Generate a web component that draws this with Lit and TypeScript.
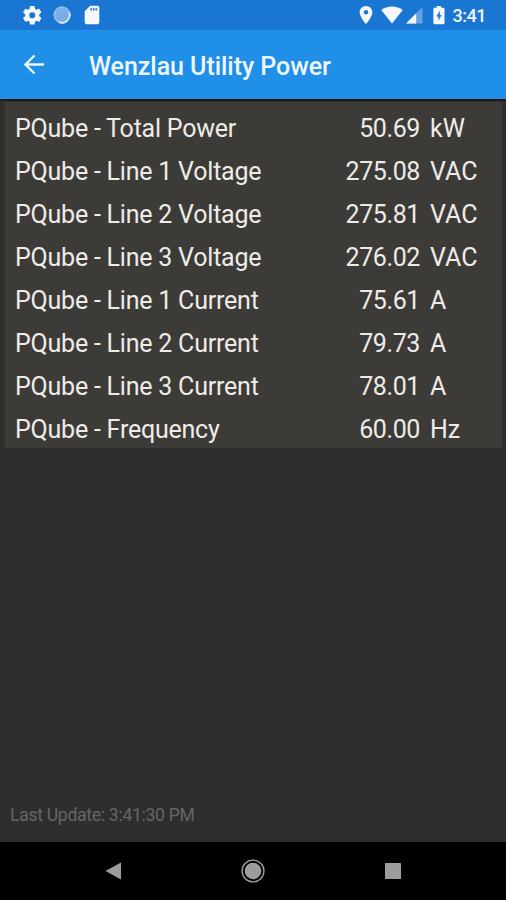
import { LitElement, html, css } from "lit";
import { customElement } from "lit/decorators.js";

interface Reading {
  name: string;
  value: string;
  unit: string;
}

const READINGS: Reading[] = [
  { name: "PQube - Total Power", value: "50.69", unit: "kW" },
  { name: "PQube - Line 1 Voltage", value: "275.08", unit: "VAC" },
  { name: "PQube - Line 2 Voltage", value: "275.81", unit: "VAC" },
  { name: "PQube - Line 3 Voltage", value: "276.02", unit: "VAC" },
  { name: "PQube - Line 1 Current", value: "75.61", unit: "A" },
  { name: "PQube - Line 2 Current", value: "79.73", unit: "A" },
  { name: "PQube - Line 3 Current", value: "78.01", unit: "A" },
  { name: "PQube - Frequency", value: "60.00", unit: "Hz" },
];

@customElement("status-bar")
class StatusBar extends LitElement {
  static styles = css`
    :host {
      display: flex;
      box-sizing: border-box;
      height: 30px;
      padding: 0 20px 0 21px;
      justify-content: space-between;
      align-items: center;
      background: #1976d2;
      color: #f4f8fd;
    }
    svg {
      display: block;
      fill: currentColor;
    }
    .group {
      display: flex;
      align-items: center;
      height: 30px;
    }
    .sync {
      margin-left: 9.5px;
    }
    .card {
      margin-left: 10px;
    }
    .wifi {
      margin-left: 8px;
    }
    .signal {
      margin-left: 3px;
    }
    .battery {
      margin-left: 10px;
    }
    .time {
      margin-left: 8px;
      padding-top: 2px;
      font: 500 18px/28px Roboto, sans-serif;
      letter-spacing: -0.5px;
    }
  `;

  render() {
    return html`
      <div class="group">
        <svg width="22.5" height="22.5" viewBox="0 0 24 24">
          <path
            d="M19.43 12.98c.04-.32.07-.64.07-.98s-.03-.66-.07-.98l2.11-1.65c.19-.15.24-.42.12-.64l-2-3.46c-.12-.22-.39-.3-.61-.22l-2.49 1c-.52-.4-1.08-.73-1.69-.98l-.38-2.65C14.46 2.18 14.25 2 14 2h-4c-.25 0-.46.18-.49.42l-.38 2.65c-.61.25-1.17.59-1.69.98l-2.49-1c-.23-.09-.49 0-.61.22l-2 3.46c-.13.22-.07.49.12.64l2.11 1.65c-.04.32-.07.65-.07.98s.03.66.07.98l-2.11 1.65c-.19.15-.24.42-.12.64l2 3.46c.12.22.39.3.61.22l2.49-1c.52.4 1.08.73 1.69.98l.38 2.65c.03.24.24.42.49.42h4c.25 0 .46-.18.49-.42l.38-2.65c.61-.25 1.17-.59 1.69-.98l2.49 1c.23.09.49 0 .61-.22l2-3.46c.12-.22.07-.49-.12-.64l-2.11-1.65zM12 15.2a3.2 3.2 0 0 1 0-6.400 3.2 3.2 0 0 1 0 6.400z"
          />
        </svg>
        <svg class="sync" width="18" height="18" viewBox="0 0 18 18">
          <circle cx="9" cy="9" r="8.4" fill="#79aee6" />
          <circle cx="9" cy="9" r="7.7" fill="none" stroke="#93bdec" stroke-width="1.5" />
          <path d="M16.2 6.3A7.7 7.7 0 0 1 6 16.1" fill="none" stroke="#deecfa" stroke-width="1.7" />
        </svg>
        <svg class="card" width="22" height="22" viewBox="0 0 24 24">
          <path
            d="M18 2h-8L4.02 8 4 20c0 1.1.9 2 2 2h12c1.1 0 2-.9 2-2V4c0-1.1-.9-2-2-2zm-6 5.2h-1.800V4.600H12v2.600zm2.800 0H13V4.600h1.800v2.600zm2.800 0h-1.800V4.600h1.800v2.600z"
          />
        </svg>
      </div>
      <div class="group">
        <svg width="14" height="20" viewBox="4.5 1 15 22">
          <path
            d="M12 2C8.13 2 5 5.13 5 9c0 5.25 7 13 7 13s7-7.75 7-13c0-3.87-3.13-7-7-7zm0 9.5a2.5 2.5 0 0 1 0-5 2.5 2.5 0 0 1 0 5z"
          />
        </svg>
        <svg class="wifi" width="22" height="18" viewBox="0 0 22 18">
          <path d="M11 17.6.2 4.1C3 1.9 6.7.5 11 .5s8 1.4 10.8 3.6z" />
        </svg>
        <svg class="signal" width="17" height="18" viewBox="0 0 17 18">
          <path d="M0 17.5 16.5 1v16.5z" opacity=".35" />
          <path d="M0 17.5 10.2 7.3v10.2z" />
        </svg>
        <svg class="battery" width="12" height="20" viewBox="0 0 12 20">
          <path
            fill-rule="evenodd"
            d="M3.7 1h4.400v1.800h2.100c.8 0 1.300.5 1.300 1.200v14c0 .7-.5 1.200-1.300 1.200H1.700c-.8 0-1.300-.5-1.300-1.200V4c0-.7.5-1.200 1.300-1.200h2zM6.800 5.800 3.400 11.500h2v4.200l3.200-5.600H6.800z"
          />
        </svg>
        <span class="time">3:41</span>
      </div>
    `;
  }
}

@customElement("title-bar")
class TitleBar extends LitElement {
  static styles = css`
    :host {
      display: flex;
      box-sizing: border-box;
      height: 69px;
      padding-left: 21px;
      align-items: center;
      background: #1f8fe8;
      color: #eef5fd;
    }
    svg {
      display: block;
      width: 26px;
      height: 26px;
      fill: none;
      stroke: currentColor;
      stroke-width: 2.4;
    }
    h1 {
      margin: 0 0 0 42px;
      padding-top: 4px;
      font: 500 25px/30px Roboto, sans-serif;
      letter-spacing: -0.05px;
      white-space: nowrap;
    }
  `;

  render() {
    return html`
      <svg viewBox="0 0 26 26"><path d="M23 12.5H4.500M13.500 3.500l-9 9 9 9" /></svg>
      <h1>Wenzlau Utility Power</h1>
    `;
  }
}

@customElement("nav-bar")
class NavBar extends LitElement {
  static styles = css`
    :host {
      display: grid;
      grid-template-columns: repeat(3, 140px);
      justify-content: center;
      align-items: center;
      justify-items: center;
      box-sizing: border-box;
      height: 58px;
      background: #000;
      color: #9c9c9c;
    }
    svg {
      display: block;
      width: 24px;
      height: 24px;
      fill: currentColor;
    }
  `;

  render() {
    return html`
      <svg viewBox="0 0 24 24"><path d="M4.5 12 20 3.5v17z" /></svg>
      <svg viewBox="0 0 24 24">
        <circle cx="12" cy="12" r="10.9" fill="none" stroke="currentColor" stroke-width="1.4" />
        <circle cx="12" cy="12" r="8.3" />
      </svg>
      <svg viewBox="0 0 24 24"><rect x="4" y="4" width="16" height="16" rx=".6" /></svg>
    `;
  }
}

@customElement("app-root")
class AppRoot extends LitElement {
  static styles = css`
    :host {
      display: flex;
      flex-direction: column;
      height: 900px;
      background: #2f2e2c;
      font-family: Roboto, sans-serif;
    }
    main {
      flex: 1;
      display: flex;
      flex-direction: column;
      justify-content: space-between;
      border-top: 2px solid #2a1718;
    }
    .readings {
      margin: 1px 4px 0 5px;
      padding: 2px 0 0 10px;
      background: #3d3b37;
      color: #eeece8;
    }
    .row {
      display: grid;
      grid-template-columns: 1fr 120px 82px;
      height: 43.05px;
      font-size: 25px;
      line-height: 50px;
      white-space: nowrap;
    }
    .name {
      letter-spacing: -0.22px;
    }
    .value {
      text-align: right;
      letter-spacing: -0.4px;
    }
    .unit {
      padding-left: 10px;
    }
    .updated {
      padding: 0 10px 15px;
      color: #666563;
      font-size: 17.6px;
      line-height: 24px;
      letter-spacing: -0.3px;
    }
  `;

  render() {
    return html`
      <status-bar></status-bar>
      <title-bar></title-bar>
      <main>
        <div class="readings">
          ${READINGS.map(
            (r) => html`
              <div class="row">
                <span class="name">${r.name}</span>
                <span class="value">${r.value}</span>
                <span class="unit">${r.unit}</span>
              </div>
            `
          )}
        </div>
        <div class="updated">Last Update: 3:41:30 PM</div>
      </main>
      <nav-bar></nav-bar>
    `;
  }
}
